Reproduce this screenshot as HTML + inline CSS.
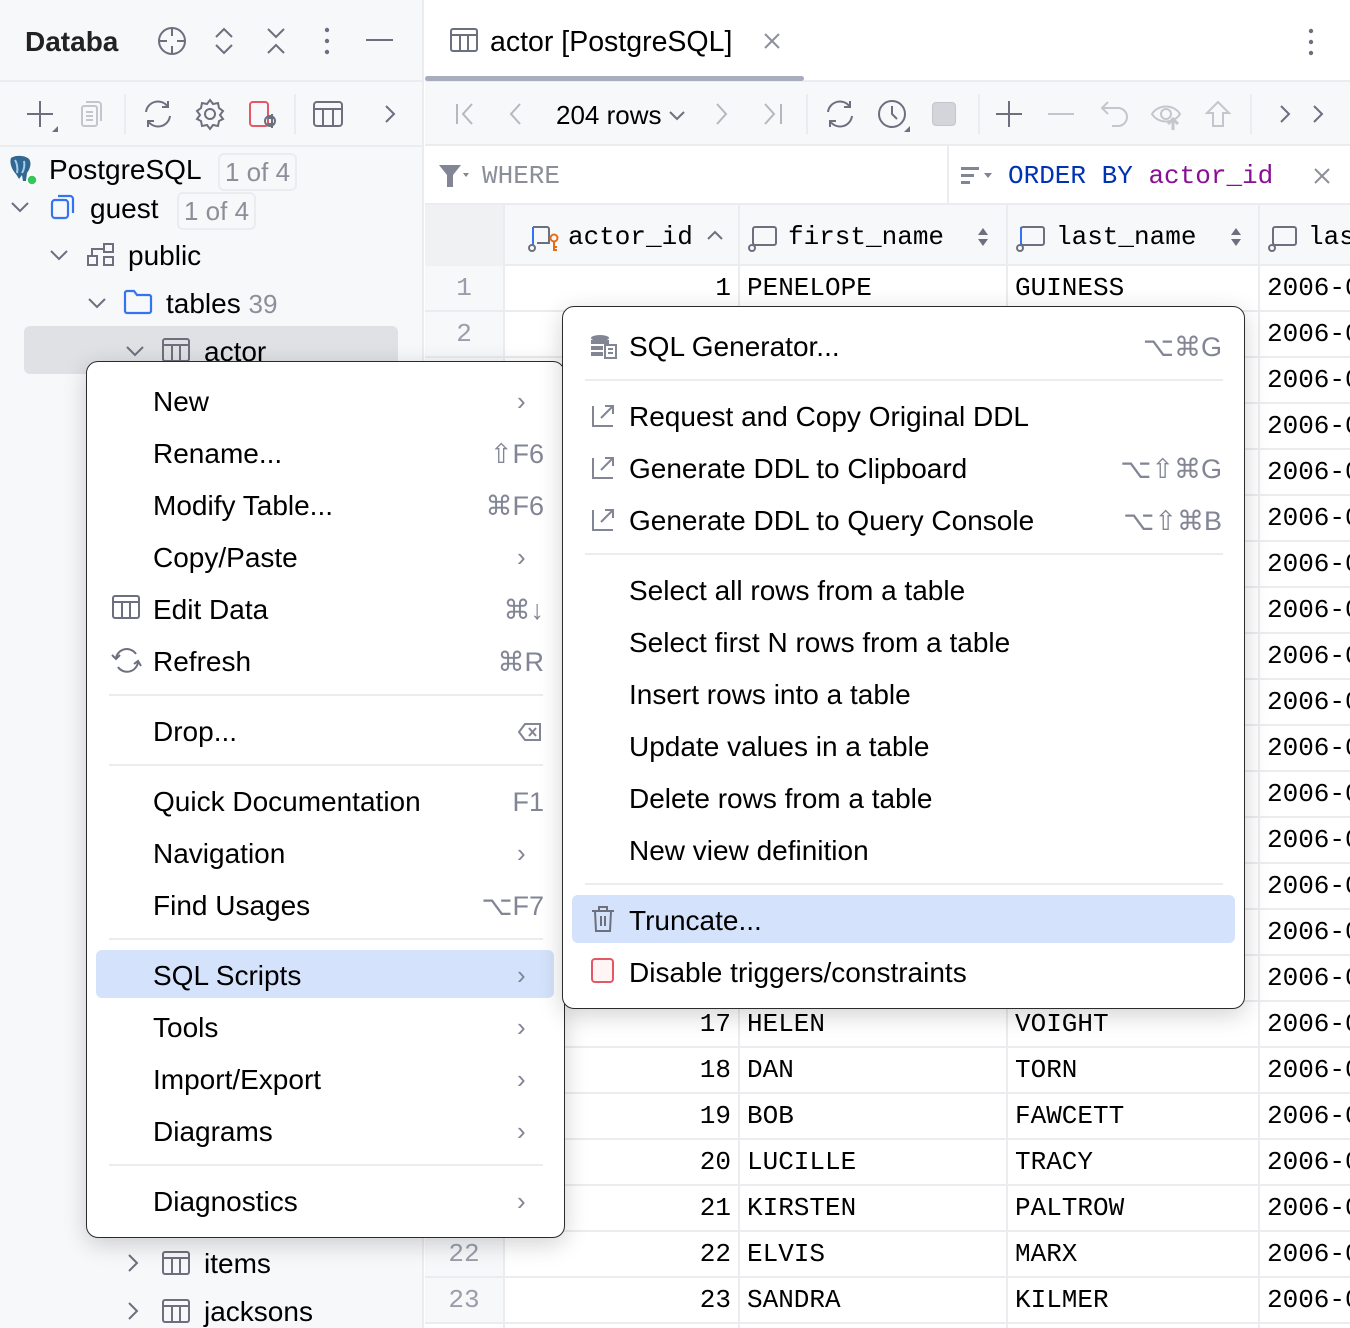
<!DOCTYPE html>
<html><head><meta charset="utf-8"><style>
*{margin:0;padding:0;box-sizing:border-box}
html,body{width:1350px;height:1328px;overflow:hidden}
body{background:#fff;font-family:"Liberation Sans",sans-serif;color:#000;position:relative}
.a{position:absolute;white-space:nowrap}
.mono{font-family:"Liberation Mono",monospace}
.g{color:#8c8f99}
svg{position:absolute;overflow:visible}
.row{position:absolute;left:425px;width:925px;height:46px;border-bottom:2px solid #ebecf0;font-family:"Liberation Mono",monospace;font-size:26px;line-height:44px;overflow:hidden;white-space:nowrap}
.row span{position:absolute;white-space:nowrap}
.rn{left:0;width:78px;text-align:center;color:#9a9dab;background:#f7f8fa;height:44px}
.id{left:79px;width:227px;text-align:right}
.fn{left:322px}.ln{left:590px}.dt{left:842px}
.vl{position:absolute;top:205px;bottom:0;width:2px;background:#ebecf0}
.menu{position:absolute;background:#fff;border:1.5px solid #2b2b2b;border-radius:12px;box-shadow:0 6px 24px rgba(0,0,0,.18)}
.mi{position:absolute;font-size:28px;line-height:30px;white-space:nowrap}
.sc{position:absolute;font-size:27px;line-height:30px;color:#818594;text-align:right;white-space:nowrap}
.sep{position:absolute;height:2px;background:#ebecf0}
.chev{position:absolute;font-size:26px;color:#818594}
</style></head><body>
<!-- left panel -->
<div class="a" style="left:0;top:0;width:424px;height:1328px;background:#f7f8fa;border-right:2px solid #ebecf0"></div>
<div class="a" style="left:0;top:80px;width:424px;height:2px;background:#ebecf0"></div>
<div class="a" style="left:0;top:145px;width:424px;height:2px;background:#ebecf0"></div>
<div class="a" style="left:25px;top:26px;font-size:28px;font-weight:bold;color:#222">Databa</div>
<svg style="left:155px;top:24px" width="34" height="34" viewBox="0 0 34 34" fill="none" stroke="#6c707e" stroke-width="2"><circle cx="17" cy="17" r="13"/><path d="M17 4v8M17 22v8M4 17h8M22 17h8"/></svg>
<svg style="left:212px;top:26px" width="24" height="30" fill="none" stroke="#6c707e" stroke-width="2"><path d="M4 11l8-8 8 8M4 19l8 8 8-8"/></svg>
<svg style="left:264px;top:26px" width="24" height="30" fill="none" stroke="#6c707e" stroke-width="2"><path d="M4 3l8 8 8-8M4 27l8-8 8 8"/></svg>
<svg style="left:322px;top:26px" width="10" height="30" fill="#6c707e"><circle cx="5" cy="4" r="2.2"/><circle cx="5" cy="15" r="2.2"/><circle cx="5" cy="26" r="2.2"/></svg>
<div class="a" style="left:366px;top:39px;width:27px;height:2px;background:#6c707e"></div>
<!-- left toolbar -->
<svg style="left:24px;top:98px" width="40" height="36" fill="none" stroke="#6c707e" stroke-width="2"><path d="M16 3v26M3 16h26"/><path d="M34 28l0 6h-6z" fill="#6c707e" stroke="none"/></svg>
<svg style="left:80px;top:100px" width="24" height="28" fill="none" stroke="#c4c6cd" stroke-width="2"><rect x="2" y="6" width="15" height="20" rx="2"/><path d="M6 2h12a3 3 0 0 1 3 3v16M6 12h7M6 16h7M6 20h7"/></svg>
<div class="a" style="left:124px;top:94px;width:2px;height:40px;background:#ebecf0"></div>
<svg style="left:140px;top:97px" width="36" height="34" fill="none" stroke="#6c707e" stroke-width="2"><path d="M6 15a12 12 0 0 1 22-5M30 19a12 12 0 0 1-22 5"/><path d="M28 4v6h-6M8 30v-6h6"/></svg>
<svg style="left:193px;top:97px" width="34" height="34" fill="none" stroke="#6c707e" stroke-width="2"><circle cx="17" cy="17" r="5"/><path d="M17 3l3 4 5-1 1 5 4 3-3 4 3 4-4 2-1 5-5-1-3 4-3-4-5 1-1-5-4-2 3-4-3-4 4-3 1-5 5 1z"/></svg>
<svg style="left:248px;top:100px" width="34" height="32" fill="none" stroke-width="2"><rect x="2" y="2" width="18" height="24" rx="3" stroke="#e55765"/><path d="M20 18h6M20 24h6M24 14v14" stroke="#6c707e"/><circle cx="22" cy="21" r="5" stroke="#6c707e"/></svg>
<div class="a" style="left:294px;top:94px;width:2px;height:40px;background:#ebecf0"></div>
<svg style="left:313px;top:101px" width="30" height="26" fill="none" stroke="#6c707e" stroke-width="2"><rect x="1" y="1" width="28" height="24" rx="3"/><path d="M1 8h28M10 8v17M20 8v17"/></svg>
<svg style="left:383px;top:104px" width="14" height="20" fill="none" stroke="#6c707e" stroke-width="2"><path d="M3 2l8 8-8 8"/></svg>
<!-- tree -->
<svg style="left:7px;top:154px" width="30" height="32"><path d="M4 4c4-3 14-3 18 1c3 4 1 10-2 14l-1 8-3 0-1-6-3 4-3-5c-3-3-7-10-5-16z" fill="#336791"/><path d="M8 6c2 3 3 9 2 13M17 7c1 4 0 9-2 12" stroke="#9ed0ef" stroke-width="2" fill="none"/><circle cx="25" cy="26" r="5" fill="#34c759" stroke="#fff" stroke-width="1.5"/></svg>
<div class="a" style="left:49px;top:154px;font-size:28px;line-height:32px">PostgreSQL</div>
<div class="a g" style="left:218px;top:153px;font-size:26px;line-height:34px;padding:0 5px;border:2px solid #ebecf0;border-radius:6px">1 of 4</div>
<svg style="left:10px;top:200px" width="20" height="14" fill="none" stroke="#6c707e" stroke-width="2"><path d="M2 3l8 8 8-8"/></svg>
<svg style="left:50px;top:194px" width="28" height="28" fill="none" stroke="#3574f0" stroke-width="2.2"><rect x="2" y="6" width="16" height="18" rx="3"/><path d="M8 2h12a3 3 0 0 1 3 3v14"/></svg>
<div class="a" style="left:90px;top:193px;font-size:28px;line-height:32px">guest</div>
<div class="a g" style="left:177px;top:192px;font-size:26px;line-height:34px;padding:0 5px;border:2px solid #ebecf0;border-radius:6px">1 of 4</div>
<svg style="left:49px;top:248px" width="20" height="14" fill="none" stroke="#6c707e" stroke-width="2"><path d="M2 3l8 8 8-8"/></svg>
<svg style="left:86px;top:242px" width="30" height="26" fill="none" stroke="#6c707e" stroke-width="2"><rect x="18" y="2" width="9" height="8"/><rect x="2" y="14" width="9" height="9"/><rect x="18" y="15" width="9" height="8"/><path d="M6 14V7h12"/></svg>
<div class="a" style="left:128px;top:240px;font-size:28px;line-height:32px">public</div>
<svg style="left:87px;top:296px" width="20" height="14" fill="none" stroke="#6c707e" stroke-width="2"><path d="M2 3l8 8 8-8"/></svg>
<svg style="left:123px;top:289px" width="30" height="26" fill="none" stroke="#3574f0" stroke-width="2.2"><path d="M2 4a2 2 0 0 1 2-2h7l3 4h12a2 2 0 0 1 2 2v14a2 2 0 0 1-2 2H4a2 2 0 0 1-2-2z"/></svg>
<div class="a" style="left:166px;top:288px;font-size:28px;line-height:32px">tables <span class="g" style="font-size:26px">39</span></div>
<div class="a" style="left:24px;top:326px;width:374px;height:48px;background:#dfe1e5;border-radius:6px"></div>
<svg style="left:125px;top:344px" width="20" height="14" fill="none" stroke="#6c707e" stroke-width="2"><path d="M2 3l8 8 8-8"/></svg>
<svg style="left:162px;top:338px" width="28" height="24" fill="none" stroke="#6c707e" stroke-width="2"><rect x="1" y="1" width="26" height="22" rx="2"/><path d="M1 7h26M10 7v16M18 7v16"/></svg>
<div class="a" style="left:204px;top:336px;font-size:28px;line-height:32px">actor</div>
<svg style="left:126px;top:1253px" width="14" height="20" fill="none" stroke="#6c707e" stroke-width="2"><path d="M3 2l8 8-8 8"/></svg>
<svg style="left:162px;top:1251px" width="28" height="24" fill="none" stroke="#6c707e" stroke-width="2"><rect x="1" y="1" width="26" height="22" rx="2"/><path d="M1 7h26M10 7v16M18 7v16"/></svg>
<div class="a" style="left:204px;top:1248px;font-size:28px;line-height:32px">items</div>
<svg style="left:126px;top:1301px" width="14" height="20" fill="none" stroke="#6c707e" stroke-width="2"><path d="M3 2l8 8-8 8"/></svg>
<svg style="left:162px;top:1299px" width="28" height="24" fill="none" stroke="#6c707e" stroke-width="2"><rect x="1" y="1" width="26" height="22" rx="2"/><path d="M1 7h26M10 7v16M18 7v16"/></svg>
<div class="a" style="left:204px;top:1296px;font-size:28px;line-height:32px">jacksons</div>

<!-- right top -->
<svg style="left:450px;top:28px" width="28" height="24" fill="none" stroke="#6c707e" stroke-width="2"><rect x="1" y="1" width="26" height="22" rx="2"/><path d="M1 7h26M10 7v16M18 7v16"/></svg>
<div class="a" style="left:490px;top:25px;font-size:28.5px;line-height:34px">actor [PostgreSQL]</div>
<svg style="left:763px;top:32px" width="18" height="18" stroke="#8c8f99" stroke-width="2"><path d="M2 2l14 14M16 2L2 16"/></svg>
<svg style="left:1306px;top:27px" width="10" height="30" fill="#6c707e"><circle cx="5" cy="4" r="2.2"/><circle cx="5" cy="15" r="2.2"/><circle cx="5" cy="26" r="2.2"/></svg>
<div class="a" style="left:425px;top:80px;width:925px;height:2px;background:#ebecf0"></div>
<div class="a" style="left:425px;top:76px;width:379px;height:5px;background:#a8adbd;border-radius:3px"></div>
<div class="a" style="left:425px;top:82px;width:925px;height:64px;background:#f7f8fa;border-bottom:2px solid #ebecf0"></div>
<svg style="left:454px;top:102px" width="22" height="24" fill="none" stroke="#b4b8bf" stroke-width="2"><path d="M3 2v20M18 2l-9 10 9 10"/></svg>
<svg style="left:508px;top:102px" width="16" height="24" fill="none" stroke="#b4b8bf" stroke-width="2"><path d="M12 2l-9 10 9 10"/></svg>
<div class="a" style="left:556px;top:100px;font-size:26px;line-height:30px">204 rows</div>
<svg style="left:668px;top:110px" width="18" height="12" fill="none" stroke="#6c707e" stroke-width="2"><path d="M2 2l7 7 7-7"/></svg>
<svg style="left:714px;top:102px" width="16" height="24" fill="none" stroke="#b4b8bf" stroke-width="2"><path d="M3 2l9 10-9 10"/></svg>
<svg style="left:762px;top:102px" width="22" height="24" fill="none" stroke="#b4b8bf" stroke-width="2"><path d="M3 2l9 10-9 10M19 2v20"/></svg>
<div class="a" style="left:806px;top:94px;width:2px;height:40px;background:#ebecf0"></div>
<svg style="left:822px;top:97px" width="36" height="34" fill="none" stroke="#6c707e" stroke-width="2"><path d="M6 15a12 12 0 0 1 22-5M30 19a12 12 0 0 1-22 5"/><path d="M28 4v6h-6M8 30v-6h6"/></svg>
<svg style="left:876px;top:98px" width="36" height="36" fill="none" stroke="#6c707e" stroke-width="2"><circle cx="16" cy="16" r="13"/><path d="M16 8v8l5 5"/><path d="M34 28v6h-6z" fill="#6c707e" stroke="none"/></svg>
<div class="a" style="left:932px;top:102px;width:24px;height:24px;background:#d3d5db;border-radius:4px;border:1px solid #c4c6cd"></div>
<div class="a" style="left:978px;top:94px;width:2px;height:40px;background:#ebecf0"></div>
<svg style="left:995px;top:100px" width="28" height="28" fill="none" stroke="#6c707e" stroke-width="2"><path d="M14 1v26M1 14h26"/></svg>
<div class="a" style="left:1048px;top:113px;width:26px;height:2px;background:#c4c6cd"></div>
<svg style="left:1100px;top:100px" width="30" height="28" fill="none" stroke="#c4c6cd" stroke-width="2"><path d="M8 2L2 8l6 6M2 8h16a9 9 0 0 1 0 18h-6"/></svg>
<svg style="left:1150px;top:100px" width="36" height="32" fill="none" stroke="#c4c6cd" stroke-width="2"><path d="M2 14c6-10 22-10 28 0-6 10-22 10-28 0z"/><circle cx="16" cy="14" r="5"/><path d="M23 30V20M18 24l5-5 5 5" stroke-width="3"/></svg>
<svg style="left:1204px;top:100px" width="28" height="28" fill="none" stroke="#c4c6cd" stroke-width="2"><path d="M14 2L3 13h6v13h10V13h6z"/></svg>
<div class="a" style="left:1250px;top:94px;width:2px;height:40px;background:#ebecf0"></div>
<svg style="left:1278px;top:104px" width="14" height="20" fill="none" stroke="#6c707e" stroke-width="2"><path d="M3 2l8 8-8 8"/></svg>
<svg style="left:1311px;top:104px" width="14" height="20" fill="none" stroke="#6c707e" stroke-width="2"><path d="M3 2l8 8-8 8"/></svg>
<!-- filter row -->
<div class="a" style="left:425px;top:146px;width:925px;height:59px;border-bottom:2px solid #ebecf0"></div>
<div class="a" style="left:947px;top:146px;width:2px;height:58px;background:#ebecf0"></div>
<svg style="left:437px;top:163px" width="34" height="26"><path d="M2 2h22l-8 10v12h-6V12z" fill="#818594"/><path d="M26 10h6l-3 4z" fill="#818594"/></svg>
<div class="a mono" style="left:482px;top:161px;font-size:26px;line-height:30px;color:#8c8f99">WHERE</div>
<svg style="left:960px;top:166px" width="36" height="22" fill="#818594"><rect x="1" y="1" width="18" height="3"/><rect x="1" y="8" width="13" height="3"/><rect x="1" y="15" width="9" height="3"/><path d="M24 7h8l-4 5z"/></svg>
<div class="a mono" style="left:1008px;top:161px;font-size:26px;line-height:30px;color:#0033b3">ORDER BY <span style="color:#871094">actor_id</span></div>
<svg style="left:1314px;top:168px" width="16" height="16" stroke="#8c8f99" stroke-width="2"><path d="M1 1l14 14M15 1L1 15"/></svg>
<!-- header -->
<div class="a" style="left:425px;top:205px;width:925px;height:61px;background:#f7f8fa;border-bottom:2px solid #ebecf0;overflow:hidden"></div>
<div class="a" style="left:425px;top:205px;width:79px;height:61px;background:#f0f1f3"></div>
<svg style="left:528px;top:224px" width="34" height="28" fill="none" stroke-width="2"><path d="M5 3h14a2 2 0 0 1 2 2v14h-12" stroke="#6c707e"/><path d="M5 3v19" stroke="#3574f0"/><circle cx="4" cy="24" r="3" stroke="#6c707e"/><circle cx="26" cy="14" r="3.5" stroke="#e66d17"/><path d="M26 18v9M26 23h3M26 26h3" stroke="#e66d17"/></svg>
<div class="a mono" style="left:568px;top:221px;font-size:26px;line-height:32px">actor_id</div>
<svg style="left:706px;top:229px" width="18" height="12" fill="none" stroke="#6c707e" stroke-width="2"><path d="M2 10l7-7 7 7"/></svg>
<svg style="left:748px;top:224px" width="30" height="28" fill="none" stroke="#6c707e" stroke-width="2"><rect x="5" y="3" width="23" height="18" rx="2"/><circle cx="4" cy="24" r="3"/></svg>
<div class="a mono" style="left:788px;top:221px;font-size:26px;line-height:32px">first_name</div>
<svg style="left:977px;top:226px" width="12" height="22" fill="#6c707e"><path d="M1 9l5-7 5 7zM1 13l5 7 5-7z"/></svg>
<svg style="left:1016px;top:224px" width="30" height="28" fill="none" stroke-width="2"><rect x="5" y="3" width="23" height="18" rx="2" stroke="#6c707e"/><path d="M5 3v18" stroke="#3574f0"/><circle cx="4" cy="24" r="3" stroke="#6c707e"/></svg>
<div class="a mono" style="left:1056px;top:221px;font-size:26px;line-height:32px">last_name</div>
<svg style="left:1230px;top:226px" width="12" height="22" fill="#6c707e"><path d="M1 9l5-7 5 7zM1 13l5 7 5-7z"/></svg>
<svg style="left:1268px;top:224px" width="30" height="28" fill="none" stroke="#6c707e" stroke-width="2"><rect x="5" y="3" width="23" height="18" rx="2"/><circle cx="4" cy="24" r="3"/></svg>
<div class="a mono" style="left:1308px;top:221px;font-size:26px;line-height:32px">las</div>
<!-- rows -->
<div class="row" style="top:266px"><span class="rn">1</span><span class="id">1</span><span class="fn">PENELOPE</span><span class="ln">GUINESS</span><span class="dt">2006-0</span></div>
<div class="row" style="top:312px"><span class="rn">2</span><span class="id">2</span><span class="fn">NICK</span><span class="ln">WAHLBERG</span><span class="dt">2006-0</span></div>
<div class="row" style="top:358px"><span class="rn">3</span><span class="id">3</span><span class="fn">ED</span><span class="ln">CHASE</span><span class="dt">2006-0</span></div>
<div class="row" style="top:404px"><span class="rn">4</span><span class="id">4</span><span class="fn">JENNIFER</span><span class="ln">DAVIS</span><span class="dt">2006-0</span></div>
<div class="row" style="top:450px"><span class="rn">5</span><span class="id">5</span><span class="fn">JOHNNY</span><span class="ln">LOLLOBRIGIDA</span><span class="dt">2006-0</span></div>
<div class="row" style="top:496px"><span class="rn">6</span><span class="id">6</span><span class="fn">BETTE</span><span class="ln">NICHOLSON</span><span class="dt">2006-0</span></div>
<div class="row" style="top:542px"><span class="rn">7</span><span class="id">7</span><span class="fn">GRACE</span><span class="ln">MOSTEL</span><span class="dt">2006-0</span></div>
<div class="row" style="top:588px"><span class="rn">8</span><span class="id">8</span><span class="fn">MATTHEW</span><span class="ln">JOHANSSON</span><span class="dt">2006-0</span></div>
<div class="row" style="top:634px"><span class="rn">9</span><span class="id">9</span><span class="fn">JOE</span><span class="ln">SWANK</span><span class="dt">2006-0</span></div>
<div class="row" style="top:680px"><span class="rn">10</span><span class="id">10</span><span class="fn">CHRISTIAN</span><span class="ln">GABLE</span><span class="dt">2006-0</span></div>
<div class="row" style="top:726px"><span class="rn">11</span><span class="id">11</span><span class="fn">ZERO</span><span class="ln">CAGE</span><span class="dt">2006-0</span></div>
<div class="row" style="top:772px"><span class="rn">12</span><span class="id">12</span><span class="fn">KARL</span><span class="ln">BERRY</span><span class="dt">2006-0</span></div>
<div class="row" style="top:818px"><span class="rn">13</span><span class="id">13</span><span class="fn">UMA</span><span class="ln">WOOD</span><span class="dt">2006-0</span></div>
<div class="row" style="top:864px"><span class="rn">14</span><span class="id">14</span><span class="fn">VIVIEN</span><span class="ln">BERGEN</span><span class="dt">2006-0</span></div>
<div class="row" style="top:910px"><span class="rn">15</span><span class="id">15</span><span class="fn">CUBA</span><span class="ln">OLIVIER</span><span class="dt">2006-0</span></div>
<div class="row" style="top:956px"><span class="rn">16</span><span class="id">16</span><span class="fn">FRED</span><span class="ln">COSTNER</span><span class="dt">2006-0</span></div>
<div class="row" style="top:1002px"><span class="rn">17</span><span class="id">17</span><span class="fn">HELEN</span><span class="ln">VOIGHT</span><span class="dt">2006-0</span></div>
<div class="row" style="top:1048px"><span class="rn">18</span><span class="id">18</span><span class="fn">DAN</span><span class="ln">TORN</span><span class="dt">2006-0</span></div>
<div class="row" style="top:1094px"><span class="rn">19</span><span class="id">19</span><span class="fn">BOB</span><span class="ln">FAWCETT</span><span class="dt">2006-0</span></div>
<div class="row" style="top:1140px"><span class="rn">20</span><span class="id">20</span><span class="fn">LUCILLE</span><span class="ln">TRACY</span><span class="dt">2006-0</span></div>
<div class="row" style="top:1186px"><span class="rn">21</span><span class="id">21</span><span class="fn">KIRSTEN</span><span class="ln">PALTROW</span><span class="dt">2006-0</span></div>
<div class="row" style="top:1232px"><span class="rn">22</span><span class="id">22</span><span class="fn">ELVIS</span><span class="ln">MARX</span><span class="dt">2006-0</span></div>
<div class="row" style="top:1278px"><span class="rn">23</span><span class="id">23</span><span class="fn">SANDRA</span><span class="ln">KILMER</span><span class="dt">2006-0</span></div>
<div class="vl" style="left:503px"></div><div class="vl" style="left:738px"></div><div class="vl" style="left:1006px"></div><div class="vl" style="left:1258px"></div>

<!-- left context menu -->
<div class="menu" style="left:86px;top:361px;width:479px;height:877px">
<div class="a" style="left:9px;top:588px;width:458px;height:48px;background:#d4e2fc;border-radius:6px"></div>
<svg style="left:25px;top:233px" width="28" height="24" fill="none" stroke="#6c707e" stroke-width="2"><rect x="1" y="1" width="26" height="22" rx="2"/><path d="M1 7h26M10 7v16M18 7v16"/></svg>
<svg style="left:23px;top:284px" width="34" height="28" fill="none" stroke="#6c707e" stroke-width="2"><path d="M6 12a11 11 0 0 1 20-4M28 16a11 11 0 0 1-20 5"/><path d="M2 9l4 4 4-4M24 18l4-3 3 5"/></svg>
<div class="mi" style="left:66px;top:25px">New</div><div class="chev" style="left:430px;top:24px">›</div>
<div class="mi" style="left:66px;top:77px">Rename...</div><div class="sc" style="right:20px;top:77px">⇧F6</div>
<div class="mi" style="left:66px;top:129px">Modify Table...</div><div class="sc" style="right:20px;top:129px">⌘F6</div>
<div class="mi" style="left:66px;top:181px">Copy/Paste</div><div class="chev" style="left:430px;top:180px">›</div>
<div class="mi" style="left:66px;top:233px">Edit Data</div><div class="sc" style="right:20px;top:233px">⌘↓</div>
<div class="mi" style="left:66px;top:285px">Refresh</div><div class="sc" style="right:20px;top:285px">⌘R</div>
<div class="sep" style="left:22px;top:332px;width:434px"></div>
<div class="mi" style="left:66px;top:355px">Drop...</div>
<svg style="left:430px;top:360px" width="26" height="20" fill="none" stroke="#818594" stroke-width="2"><path d="M8 2h15v16H8L2 10z"/><path d="M12 6l7 8M19 6l-7 8"/></svg>
<div class="sep" style="left:22px;top:402px;width:434px"></div>
<div class="mi" style="left:66px;top:425px">Quick Documentation</div><div class="sc" style="right:20px;top:425px">F1</div>
<div class="mi" style="left:66px;top:477px">Navigation</div><div class="chev" style="left:430px;top:476px">›</div>
<div class="mi" style="left:66px;top:529px">Find Usages</div><div class="sc" style="right:20px;top:529px">⌥F7</div>
<div class="sep" style="left:22px;top:576px;width:434px"></div>
<div class="mi" style="left:66px;top:599px">SQL Scripts</div><div class="chev" style="left:430px;top:598px">›</div>
<div class="mi" style="left:66px;top:651px">Tools</div><div class="chev" style="left:430px;top:650px">›</div>
<div class="mi" style="left:66px;top:703px">Import/Export</div><div class="chev" style="left:430px;top:702px">›</div>
<div class="mi" style="left:66px;top:755px">Diagrams</div><div class="chev" style="left:430px;top:754px">›</div>
<div class="sep" style="left:22px;top:802px;width:434px"></div>
<div class="mi" style="left:66px;top:825px">Diagnostics</div><div class="chev" style="left:430px;top:824px">›</div>
</div>

<!-- right submenu -->
<div class="menu" style="left:562px;top:306px;width:683px;height:703px">
<svg style="left:27px;top:27px" width="28" height="26"><ellipse cx="10" cy="4" rx="9" ry="3" fill="#818594"/><rect x="1" y="6" width="18" height="4" fill="#818594"/><rect x="1" y="12" width="12" height="4" fill="#818594"/><rect x="1" y="18" width="12" height="4" fill="#818594"/><rect x="15" y="11" width="11" height="13" fill="#fff" stroke="#818594" stroke-width="2"/><path d="M18 15h5M18 19h5" stroke="#818594" stroke-width="2"/></svg>
<div class="mi" style="left:66px;top:25px">SQL Generator...</div><div class="sc" style="right:22px;top:25px">⌥⌘G</div>
<div class="sep" style="left:22px;top:72px;width:638px"></div>
<svg style="left:28px;top:95px" width="26" height="26" fill="none" stroke="#818594" stroke-width="2"><path d="M2 4v20h20M10 16L22 4M14 4h8v8"/></svg>
<div class="mi" style="left:66px;top:95px">Request and Copy Original DDL</div>
<svg style="left:28px;top:147px" width="26" height="26" fill="none" stroke="#818594" stroke-width="2"><path d="M2 4v20h20M10 16L22 4M14 4h8v8"/></svg>
<div class="mi" style="left:66px;top:147px">Generate DDL to Clipboard</div><div class="sc" style="right:22px;top:147px">⌥⇧⌘G</div>
<svg style="left:28px;top:199px" width="26" height="26" fill="none" stroke="#818594" stroke-width="2"><path d="M2 4v20h20M10 16L22 4M14 4h8v8"/></svg>
<div class="mi" style="left:66px;top:199px">Generate DDL to Query Console</div><div class="sc" style="right:22px;top:199px">⌥⇧⌘B</div>
<div class="sep" style="left:22px;top:246px;width:638px"></div>
<div class="mi" style="left:66px;top:269px">Select all rows from a table</div>
<div class="mi" style="left:66px;top:321px">Select first N rows from a table</div>
<div class="mi" style="left:66px;top:373px">Insert rows into a table</div>
<div class="mi" style="left:66px;top:425px">Update values in a table</div>
<div class="mi" style="left:66px;top:477px">Delete rows from a table</div>
<div class="mi" style="left:66px;top:529px">New view definition</div>
<div class="sep" style="left:22px;top:576px;width:638px"></div>
<div class="a" style="left:9px;top:588px;width:663px;height:48px;background:#d4e2fc;border-radius:6px"></div>
<svg style="left:28px;top:598px" width="24" height="28" fill="none" stroke="#6c707e" stroke-width="2"><path d="M1 6h22M8 6V2h8v4M4 6l1 20h14l1-20M10 11v10M14 11v10"/></svg>
<div class="mi" style="left:66px;top:599px">Truncate...</div>
<svg style="left:28px;top:651px" width="24" height="26" fill="#fff5f5" stroke="#e55765" stroke-width="2"><rect x="1" y="1" width="21" height="23" rx="3"/></svg>
<div class="mi" style="left:66px;top:651px">Disable triggers/constraints</div>
</div>
</body></html>
